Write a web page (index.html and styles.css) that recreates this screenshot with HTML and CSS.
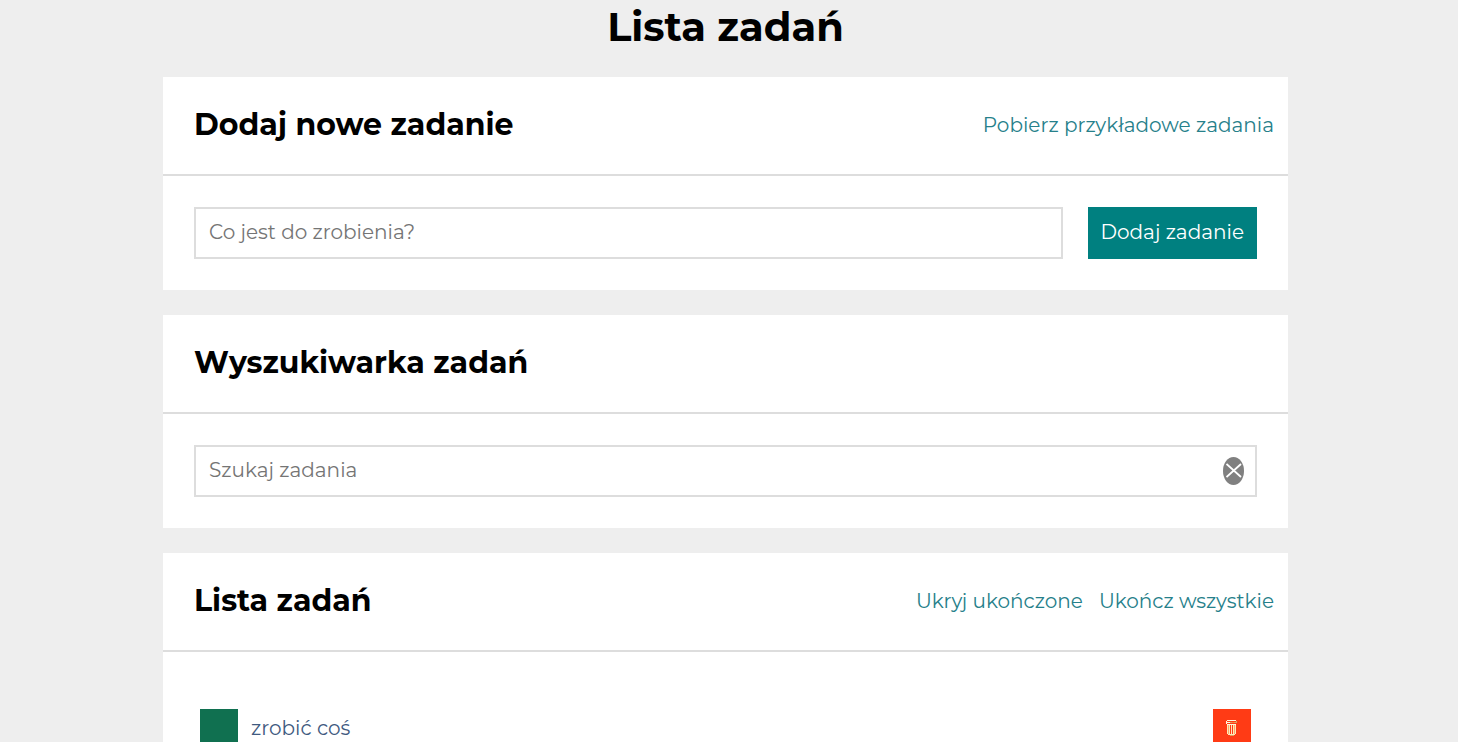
FILE: index.html
```html
<!DOCTYPE html>
<html lang="pl">
<head>
<meta charset="utf-8">
<meta name="viewport" content="width=device-width, initial-scale=1">
<title>Lista zadań</title>
<link rel="stylesheet" href="styles.css">
</head>
<body>
<main class="container">
  <h1 class="title">Lista zadań</h1>

  <section class="section">
    <header class="section__header">
      <h2 class="section__title">Dodaj nowe zadanie</h2>
      <div class="section__actions">
        <button class="link-button" type="button">Pobierz przykładowe zadania</button>
      </div>
    </header>
    <form class="section__body form">
      <input class="input" type="text" aria-label="Nowe zadanie" placeholder="Co jest do zrobienia?">
      <button class="form__button" type="button">Dodaj zadanie</button>
    </form>
  </section>

  <section class="section">
    <header class="section__header">
      <h2 class="section__title">Wyszukiwarka zadań</h2>
    </header>
    <div class="section__body search">
      <input class="input" type="text" aria-label="Szukaj" placeholder="Szukaj zadania">
      <button class="search__clear" type="button" aria-label="Wyczyść">
        <svg class="search__icon" viewBox="0 0 16 16" aria-hidden="true"><path d="M.5 1 15 14M15 1 .5 14" fill="none" stroke="#fff" stroke-width="1.800"/></svg>
      </button>
    </div>
  </section>

  <section class="section">
    <header class="section__header">
      <h2 class="section__title">Lista zadań</h2>
      <div class="section__actions">
        <button class="link-button" type="button">Ukryj ukończone</button>
        <button class="link-button" type="button">Ukończ wszystkie</button>
      </div>
    </header>
    <ul class="section__body tasks">
      <li class="task">
        <button class="task__button task__button--done" type="button" aria-label="Ukończ"></button>
        <a class="task__name" href="#">zrobić coś</a>
        <button class="task__button task__button--remove" type="button" aria-label="Usuń">
          <svg class="task__icon" viewBox="0 0 12 16" aria-hidden="true" shape-rendering="crispEdges">
            <path d="M1 0h9v1H1zM0 1h1v3H0zM1 2h3v1H1zM1 4h9v1H1z" fill="#fff6dc"/>
            <path d="M4 2h2v1H4zM8 2h2v1H8zM10 1h1v2h-1zM4 15h4v1H4z" fill="#d9a060"/>
            <path d="M6 2h2v1H6z" fill="#f9803c"/>
            <path d="M1 5h1v9H1zM3 5h1v9H3zM5 5h1v9H5zM7 5h1v9H7zM9 5h1v9H9zM2 14h7v1H2z" fill="#ffe6b8"/>
            <path d="M2 5h1v9H2zM8 5h1v9H8z" fill="#f9a868"/>
          </svg>
        </button>
      </li>
    </ul>
  </section>
</main>
</body>
</html>
```
FILE: styles.css
```css
* {
  box-sizing: border-box;
}

body {
  margin: 0;
  padding-right: 7px;
  background: #eee;
  color: #000;
  font: 400 20px/24px Montserrat, sans-serif;
}

button,
input {
  font: inherit;
}

button {
  border: 0;
  cursor: pointer;
}

.container {
  max-width: 1125px;
  margin: 0 auto;
}

.title {
  margin: 0;
  padding: 2px 0 25px;
  font-size: 40px;
  line-height: 50px;
  font-weight: 700;
  text-align: center;
}

.section {
  margin-bottom: 25px;
  background: #fff;
}

.section__header {
  display: flex;
  align-items: center;
  justify-content: space-between;
  min-height: 99px;
  padding: 0 14px 2px 31px;
  border-bottom: 2px solid #ddd;
}

.section__title {
  margin: 0;
  font-size: 30px;
  line-height: 36px;
  font-weight: 700;
}

.section__actions {
  display: flex;
  gap: 16px;
}

.link-button {
  padding: 0;
  background: none;
  color: #26808a;
}

.section__body {
  padding: 31px;
}

.form {
  display: flex;
  gap: 25px;
}

.input {
  flex: 1;
  min-width: 0;
  width: 100%;
  height: 52px;
  padding: 0 13px 2px;
  border: 2px solid #ddd;
  border-radius: 0;
  background: #fff;
}

.input::placeholder {
  color: #757575;
}

.form__button {
  padding: 0 13px 2px;
  background: teal;
  color: #fff;
}

.search {
  display: grid;
  align-items: center;
}

.search > * {
  grid-area: 1 / 1;
}

.search__clear {
  display: flex;
  align-items: center;
  justify-content: center;
  justify-self: end;
  width: 21px;
  height: 28px;
  margin-right: 13px;
  padding: 0;
  border-radius: 50%;
  background: gray;
}

.search__icon {
  flex: none;
  width: 16px;
  height: 16px;
}

.tasks {
  margin: 0;
  list-style: none;
}

.task {
  display: flex;
  align-items: center;
  gap: 13px;
  padding: 26px 6px;
}

.task__button {
  display: flex;
  align-items: center;
  justify-content: center;
  flex: none;
  width: 38px;
  height: 38px;
  padding: 0;
}

.task__button--done {
  background: #107050;
}

.task__button--remove {
  background: #ff3b15;
}

.task__icon {
  width: 12px;
  height: 16px;
}

.task__name {
  flex: 1;
  color: #3f5a80;
  text-decoration: none;
}
```
